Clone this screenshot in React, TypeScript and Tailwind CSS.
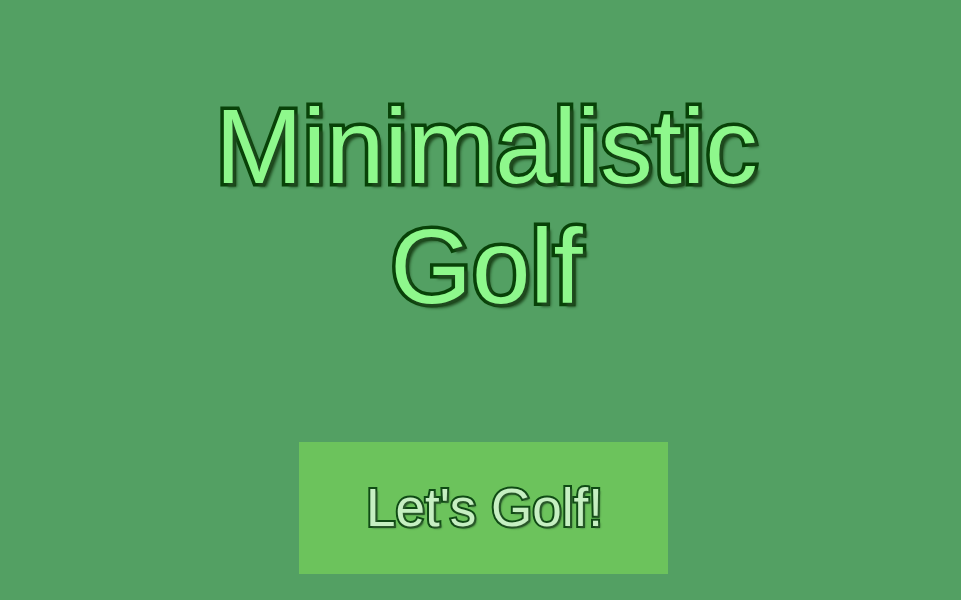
export default function App() {
  return (
    <div className="flex h-[600px] w-full flex-col items-center bg-[#53a063] font-['Liberation_Sans',Arial,sans-serif]">
      <h1 className="mt-[87px] pl-[12px] text-center text-[105px] leading-[120px] text-[#8ef88c] [-webkit-text-stroke:7px_#084208] [paint-order:stroke_fill] [text-shadow:4px_4px_3px_#1f4a1f]">
        Minimalistic
        <br />
        Golf
      </h1>
      <button className="ml-[6px] mt-[115px] flex h-[132px] w-[369px] items-center justify-center bg-[#6cc35c] pl-[2px] text-[53px] text-[#c6efc2] [-webkit-text-stroke:4px_#0f4a14] [paint-order:stroke_fill] [text-shadow:2px_2px_2px_#2c5a2c]">
        Let's Golf!
      </button>
    </div>
  );
}
